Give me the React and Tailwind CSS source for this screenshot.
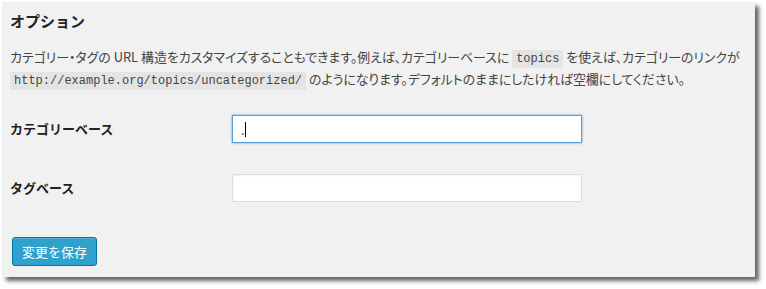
import { useState } from 'react'

const jp = "font-['Noto_Sans_CJK_JP','Noto_Sans',sans-serif]"
const mono = "font-['Liberation_Mono','DejaVu_Sans_Mono',monospace]"

function Code({ children }) {
  return (
    <code className={`${mono} tracking-normal [font-feature-settings:normal] text-[12px] leading-[18px] bg-[#e4e4e4] text-[#444] px-[4px] py-[2px]`}>
      {children}
    </code>
  )
}

export default function App() {
  const [category, setCategory] = useState('.')
  const [tag, setTag] = useState('')

  return (
    <div className="bg-white w-[766px] h-[289px] pt-[2px] pl-[2px]">
      <div className={`${jp} w-[753px] h-[275px] bg-[#f1f1f1] text-[#444] shadow-[4px_4px_4px_rgba(0,0,0,0.6)] px-[8px]`}>
        <h3 className="text-[15px] font-bold text-[#222] pt-[9px] leading-[20px]">オプション</h3>

        {/* permalink description */}
        <p className="mt-[15px] text-[12.9px] leading-[21px] [font-feature-settings:'palt'] text-[#444]">
          カテゴリー・タグの URL 構造をカスタマイズすることもできます。例えば、カテゴリーベースに <Code>topics</Code> を使えば、カテゴリーのリンクが
          <br />
          <Code>http://example.org/topics/uncategorized/</Code> のようになります。デフォルトのままにしたければ空欄にしてください。
        </p>

        <div className="mt-[25px] flex flex-col gap-[31px]">
          <div className="flex items-center">
            <label className="w-[222px] text-[13px] font-bold text-[#222]">カテゴリーベース</label>
            <div className="relative">
              <input
                value={category}
                onChange={e => setCategory(e.target.value)}
                className="w-[350px] h-[28px] bg-white border border-[#5b9dd9] shadow-[0_0_2px_rgba(30,140,190,0.8)] px-[8px] text-[13px] text-[#333] outline-none"
              />
              <span className="absolute left-[13px] top-[7px] w-px h-[15px] bg-black" />
            </div>
          </div>
          <div className="flex items-center">
            <label className="w-[222px] text-[13px] font-bold text-[#222]">タグベース</label>
            <input
              value={tag}
              onChange={e => setTag(e.target.value)}
              className="w-[350px] h-[28px] bg-white border border-[#dddddd] shadow-[inset_0_1px_2px_rgba(0,0,0,0.05)] px-[8px] text-[13px] outline-none"
            />
          </div>
        </div>

        <button className="mt-[35px] ml-[2px] w-[85px] h-[29px] rounded-[3px] bg-[#2ea2cc] border border-[#0074a2] shadow-[inset_0_1px_0_rgba(120,200,230,0.5)] text-white text-[13px]">
          変更を保存
        </button>
      </div>
    </div>
  )
}
